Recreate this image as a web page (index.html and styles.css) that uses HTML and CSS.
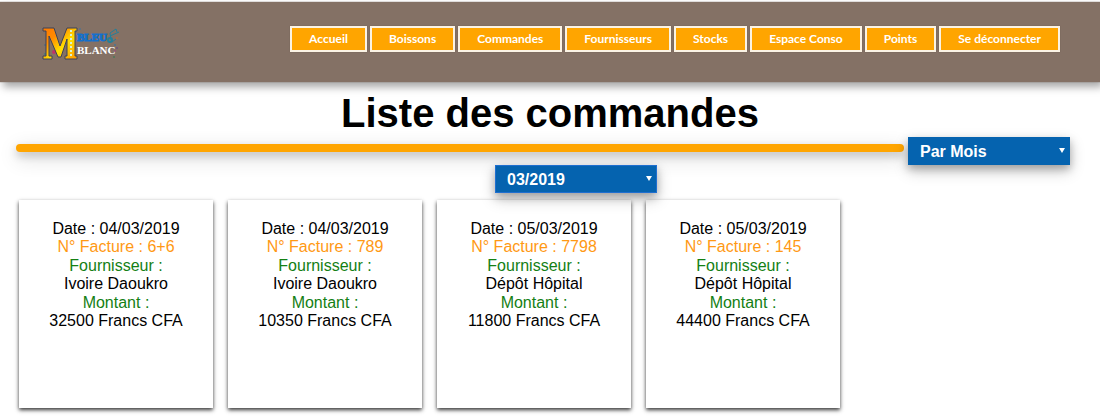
FILE: index.html
```html
<!DOCTYPE html>
<html lang="fr">
<head>
<meta charset="utf-8">
<title>Liste des commandes</title>
<link rel="stylesheet" href="styles.css">
</head>
<body>
<header class="header">
  <a class="logo" href="#" aria-label="Bleu Blanc">
    <svg class="logo-art" viewBox="0 0 78 36" width="78" height="36" aria-hidden="true">
      <defs>
        <linearGradient id="gold" x1="0" y1="0" x2="1" y2="1">
          <stop offset="0" stop-color="#ff7a00"/>
          <stop offset="0.3" stop-color="#ff8a00"/>
          <stop offset="0.6" stop-color="#ffe000"/>
          <stop offset="1" stop-color="#ff9500"/>
        </linearGradient>
      </defs>
      <g opacity="0.75">
        <circle cx="3" cy="19" r="1" fill="#456b8a"/><circle cx="5" cy="23" r="1" fill="#a34b7c"/>
        <circle cx="3" cy="28" r="1" fill="#2f7d88"/><circle cx="12" cy="26" r="2" fill="#d51f6a"/>
        <circle cx="14" cy="20" r="1" fill="#3d8a5c"/><circle cx="17" cy="28" r="1" fill="#287ba8"/>
        <circle cx="75" cy="12" r="1" fill="#bb6b35"/><circle cx="73" cy="19" r="1" fill="#3279a8"/>
        <circle cx="73" cy="25" r="1" fill="#9c4784"/><circle cx="72" cy="31" r="1" fill="#397b55"/>
        <circle cx="38" cy="3" r="1" fill="#45749b"/><circle cx="75" cy="22" r="1" fill="#6c4a82"/>
      </g>
      <path d="M1 2H12L18 20L25 2H35V5H33V30H35V33H23V30H25V13L19 31H16L7 10V30H10V33H1V30H4V5H1Z" fill="url(#gold)" stroke="#3d4258" stroke-width="1"/>
      <path d="M29 4V30" stroke="#d8f3d8" stroke-width="2" stroke-dasharray="2 2"/>
      <circle cx="68" cy="14" r="2" fill="none" stroke="#247f99" stroke-width="2"/>
      <path d="M69 14L68 7L74 3L75 6M68 10L77 6M70 16L74 13" fill="none" stroke="#247f99" stroke-width="1"/>
      <text class="logo-blue" x="35" y="15">BLEU</text>
      <text class="logo-white" x="35" y="28">BLANC</text>
    </svg>
  </a>
  <nav class="nav">
    <a class="nav-link" href="#">Accueil</a>
    <a class="nav-link" href="#">Boissons</a>
    <a class="nav-link" href="#">Commandes</a>
    <a class="nav-link" href="#">Fournisseurs</a>
    <a class="nav-link" href="#">Stocks</a>
    <a class="nav-link" href="#">Espace Conso</a>
    <a class="nav-link" href="#">Points</a>
    <a class="nav-link" href="#">Se déconnecter</a>
  </nav>
</header>
<main class="main">
  <h1 class="title">Liste des commandes</h1>
  <div class="toolbar">
    <div class="rule"></div>
    <div class="select-box">
      <select class="select" aria-label="Période"><option>Par Mois</option></select>
    </div>
  </div>
  <div class="month">
    <div class="select-box">
      <select class="select select-active" aria-label="Mois"><option>03/2019</option></select>
    </div>
  </div>
  <div class="cards">
    <article class="card">
      <div><p>Date : 04/03/2019</p><p class="invoice">N° Facture : 6+6</p></div>
      <div><p class="label">Fournisseur :</p><p>Ivoire Daoukro</p></div>
      <div><p class="label">Montant :</p><p>32500 Francs CFA</p></div>
    </article>
    <article class="card">
      <div><p>Date : 04/03/2019</p><p class="invoice">N° Facture : 789</p></div>
      <div><p class="label">Fournisseur :</p><p>Ivoire Daoukro</p></div>
      <div><p class="label">Montant :</p><p>10350 Francs CFA</p></div>
    </article>
    <article class="card">
      <div><p>Date : 05/03/2019</p><p class="invoice">N° Facture : 7798</p></div>
      <div><p class="label">Fournisseur :</p><p>Dépôt Hôpital</p></div>
      <div><p class="label">Montant :</p><p>11800 Francs CFA</p></div>
    </article>
    <article class="card">
      <div><p>Date : 05/03/2019</p><p class="invoice">N° Facture : 145</p></div>
      <div><p class="label">Fournisseur :</p><p>Dépôt Hôpital</p></div>
      <div><p class="label">Montant :</p><p>44400 Francs CFA</p></div>
    </article>
  </div>
</main>
</body>
</html>
```
FILE: styles.css
```css
* { box-sizing: border-box; }

body {
  margin: 0;
  padding-top: 2px;
  background: #fff;
  color: #000;
  font-family: "Liberation Sans", Arial, sans-serif;
  font-size: 16px;
}

.header {
  display: flex;
  align-items: flex-start;
  justify-content: space-between;
  min-height: 80px;
  padding: 24px 40px 0 42px;
  background: #847165;
  box-shadow: 0 0 1px #6a5a50, 3px 5px 8px rgba(0, 0, 0, 0.35);
}

.logo, .logo-art { display: block; }

.logo-blue, .logo-white {
  font-family: "Liberation Serif", serif;
  font-weight: bold;
  font-size: 11px;
}

.logo-blue { fill: #1470cc; stroke: #1470cc; }
.logo-white { fill: #fff; stroke: #fff; stroke-width: 0; }

.nav { display: flex; gap: 3px; }

.nav-link {
  padding: 0 17px;
  border: 2px solid #fbf3e4;
  background: #ffa500;
  box-shadow: 0 0 1px #6a5a50;
  color: #fff;
  font: bold 12px/22px "Trebuchet MS", Lato, sans-serif;
  text-decoration: none;
  white-space: nowrap;
}

.main { padding: 8px 16px 10px; }

.title {
  margin: 0;
  font-size: 40px;
  line-height: 47px;
  text-align: center;
}

.toolbar {
  display: flex;
  align-items: flex-start;
  gap: 4px;
  padding-right: 14px;
}

.rule {
  flex: 1;
  height: 8px;
  margin-top: 7px;
  border-radius: 4px;
  background: #ffa500;
  box-shadow: 0 4px 8px rgba(0, 0, 0, 0.2), 0 6px 20px rgba(0, 0, 0, 0.19);
}

.select-box { position: relative; width: 162px; }

.select-box::after {
  content: "";
  position: absolute;
  top: 11px;
  right: 5px;
  border: solid transparent;
  border-width: 5px 3px 0;
  border-top-color: #fff;
  pointer-events: none;
}

.select {
  display: block;
  width: 100%;
  height: 28px;
  padding: 0 11px;
  border: 1px solid #0563af;
  border-radius: 0;
  appearance: none;
  background: #0563af;
  box-shadow: 0 4px 8px rgba(0, 0, 0, 0.25), 0 6px 16px rgba(0, 0, 0, 0.2);
  color: #fff;
  font: bold 16px "Liberation Sans", Arial, sans-serif;
}

.select-active { border-color: #1f6fd0; }

.month {
  display: flex;
  justify-content: center;
  padding-left: 52px;
}

.cards {
  display: grid;
  grid-template-columns: repeat(auto-fill, 194px);
  gap: 15px;
  padding: 7px 3px 0;
}

.card {
  display: flex;
  flex-direction: column;
  gap: 1px;
  min-height: 208px;
  padding: 20px 8px;
  background: #fff;
  box-shadow: 0 2px 4px rgba(0, 0, 0, 0.8);
  line-height: 18px;
  text-align: center;
}

.card p { margin: 0; }
.invoice { color: #ff9914; }
.label { color: #148014; }
```
